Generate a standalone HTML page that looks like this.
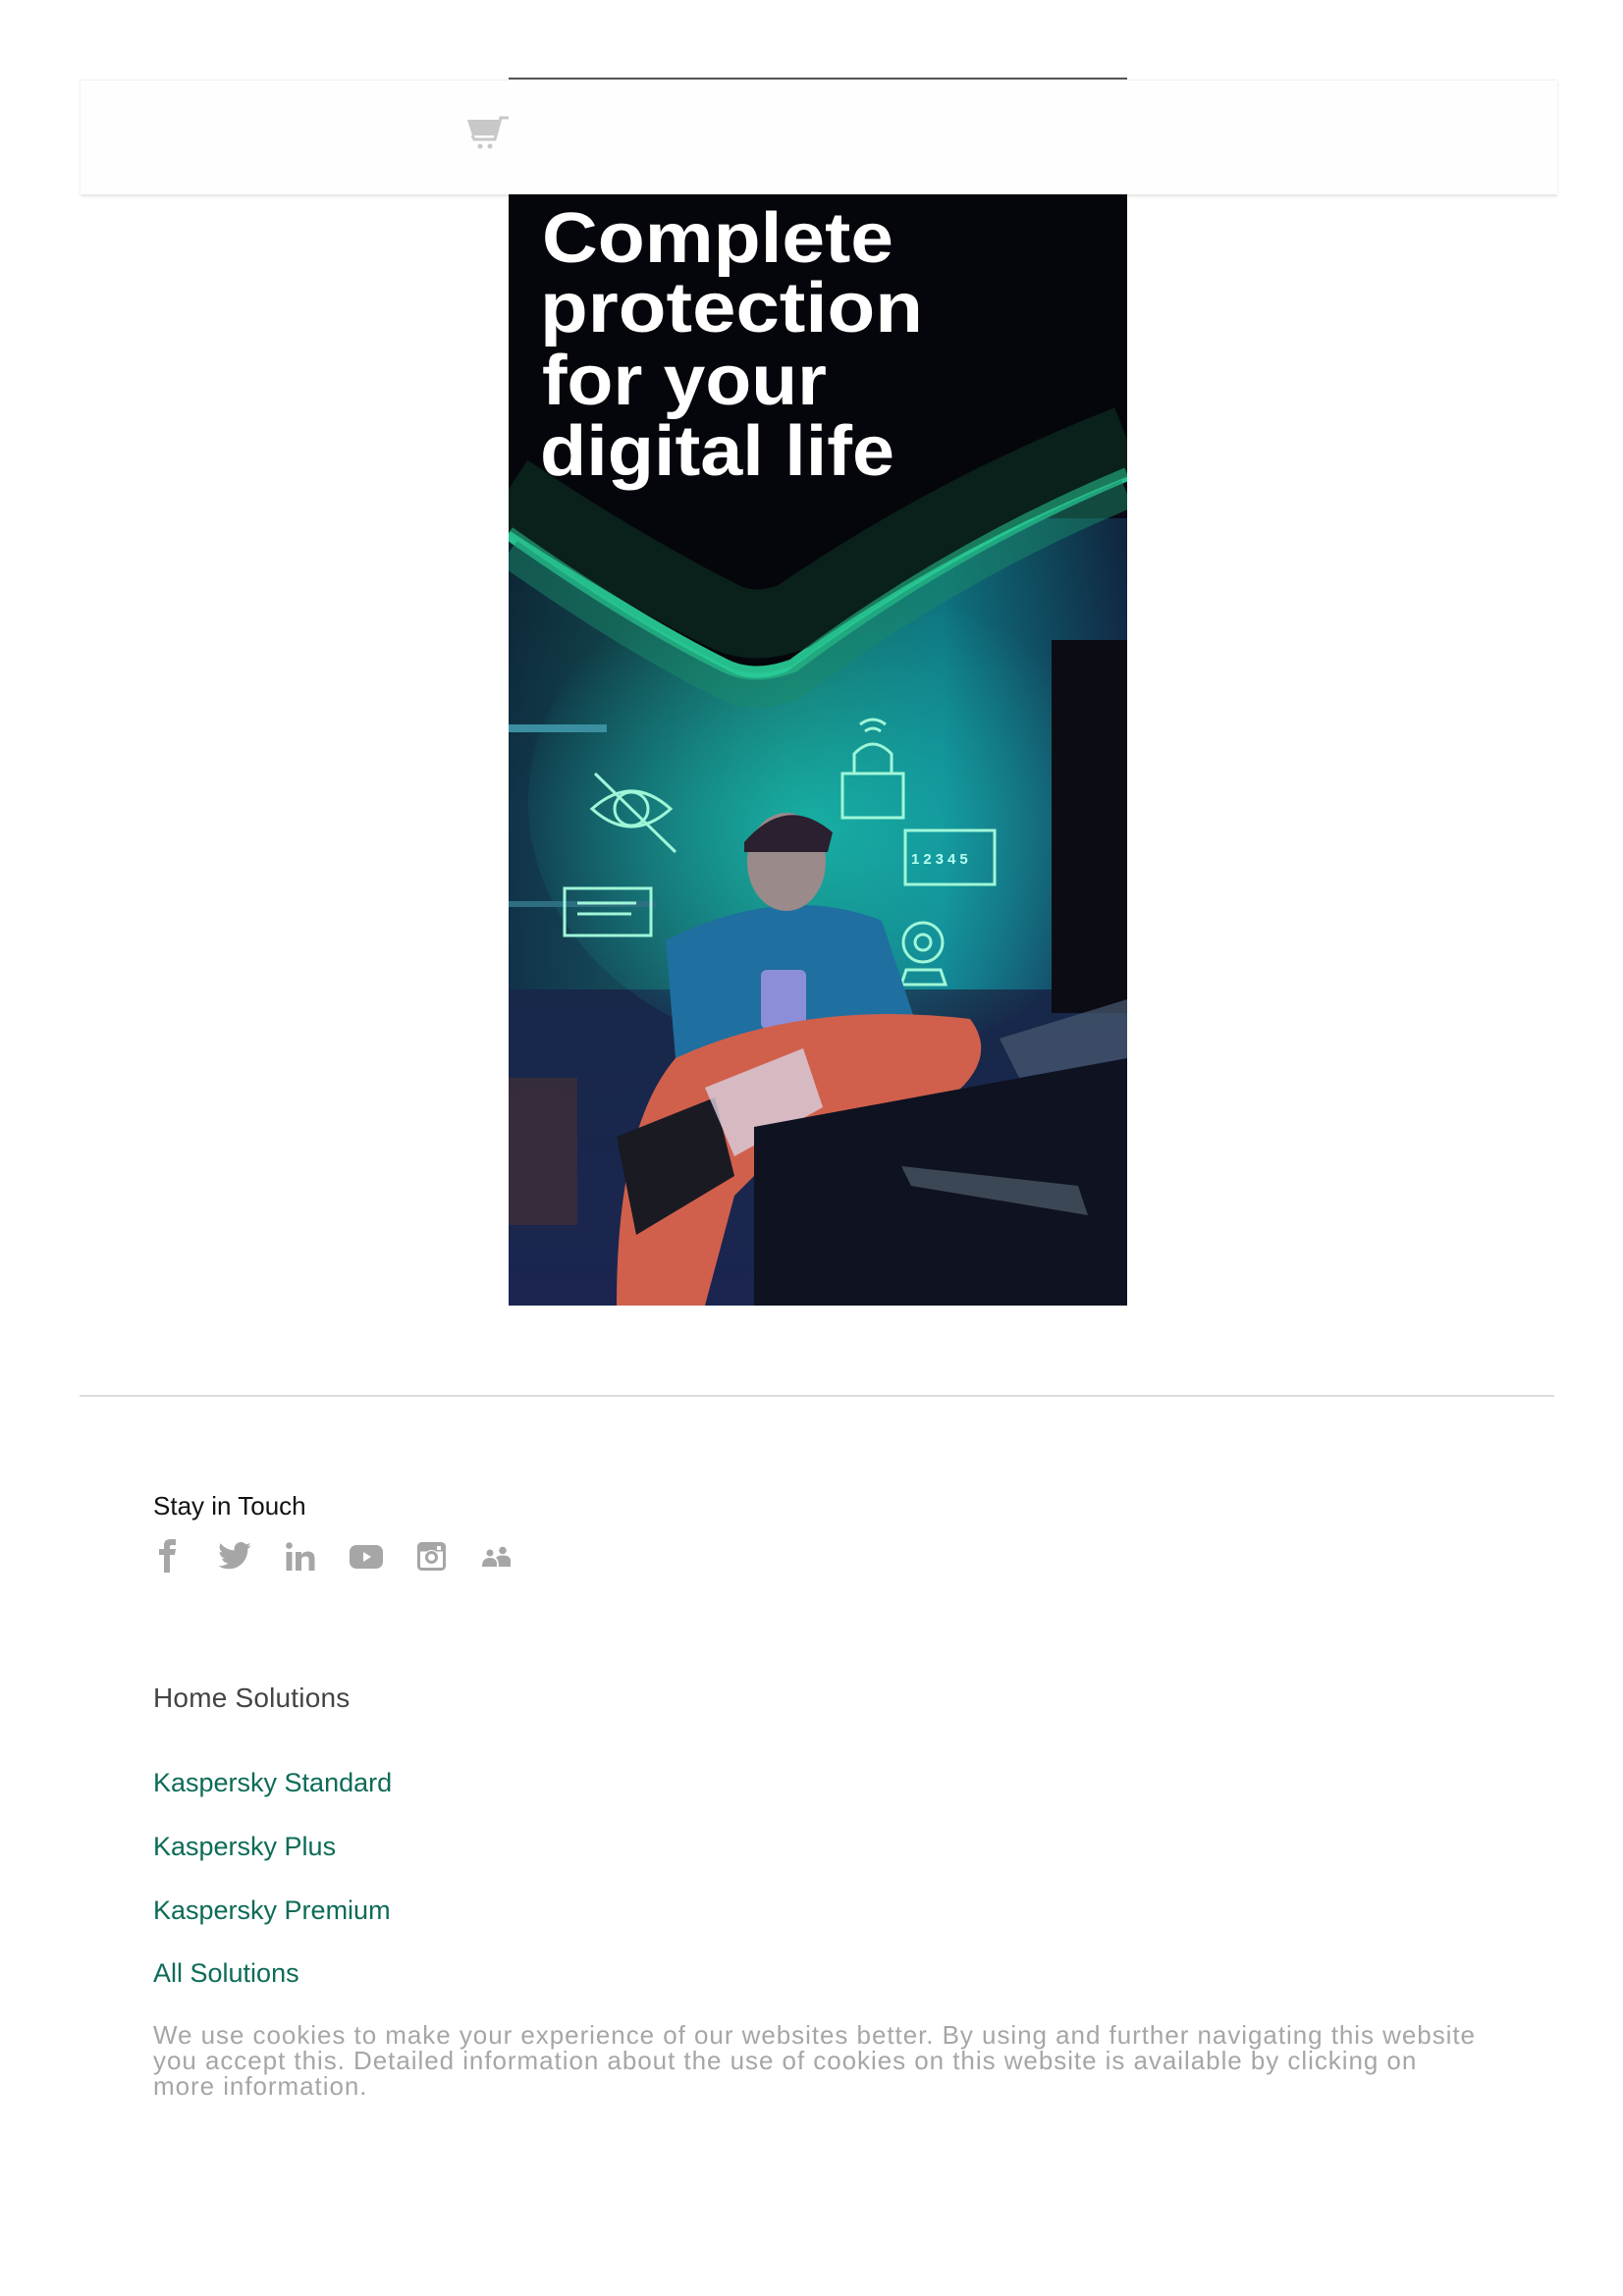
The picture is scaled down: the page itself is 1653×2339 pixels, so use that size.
<!DOCTYPE html>
<html><head><meta charset="utf-8"><style>
html,body{margin:0;padding:0;background:#fff;}
body{width:1653px;height:2339px;position:relative;overflow:hidden;font-family:"Liberation Sans",sans-serif;}
.hdr{position:absolute;left:82px;top:81px;width:1504px;height:116px;background:#fefefe;border-top:1px solid #f0f0f0;box-shadow:0 2px 3px rgba(0,0,0,0.12);}
.topline{position:absolute;left:518px;top:79px;width:630px;height:2px;background:#555;}
.img{position:absolute;left:518px;top:198px;width:630px;height:1132px;}
.hr{position:absolute;left:81px;top:1421px;width:1502px;height:2px;background:#ddd;}
.t{position:absolute;left:156px;white-space:nowrap;}
.st{top:1519px;font-size:26px;color:#111;}
.hs{top:1714px;font-size:28px;color:#444;letter-spacing:0.2px;}
.lk{font-size:27px;color:#0c6b57;}
.ck{top:2060px;font-size:26px;line-height:26px;color:#a6a6a6;letter-spacing:0.95px;}
.ic{position:absolute;top:1566px;}
</style></head><body>
<div class="hdr"></div>
<div class="topline"></div>
<svg style="position:absolute;left:474px;top:118px" width="50" height="38" viewBox="0 0 50 38">
<path d="M2 4 H34 L30 20 H7 Z" fill="#c8c8c8"/>
<path d="M7 20 L9 24 H30 L36 2 H44" stroke="#c8c8c8" stroke-width="3" fill="none"/>
<circle cx="15" cy="31" r="2.5" fill="#c8c8c8"/><circle cx="25" cy="31" r="2.5" fill="#c8c8c8"/>
</svg>
<svg class="img" viewBox="0 0 630 1132" preserveAspectRatio="none">
<defs>
<linearGradient id="bg" x1="0" y1="0" x2="0" y2="1"><stop offset="0" stop-color="#05050d"/><stop offset="0.3" stop-color="#0b0b18"/><stop offset="0.55" stop-color="#152a45"/><stop offset="1" stop-color="#1b2550"/></linearGradient>
<linearGradient id="gl" x1="0" y1="0" x2="1" y2="0"><stop offset="0" stop-color="#0d3a4a"/><stop offset="0.45" stop-color="#1aa58a"/><stop offset="0.7" stop-color="#0ec0c9"/><stop offset="1" stop-color="#14395c"/></linearGradient>
<radialGradient id="glow" cx="0.45" cy="0.55" r="0.5"><stop offset="0" stop-color="#17c3b5" stop-opacity="0.75"/><stop offset="1" stop-color="#17c3b5" stop-opacity="0"/></radialGradient>
</defs>
<rect width="630" height="1132" fill="url(#bg)"/>
<rect x="0" y="330" width="630" height="480" fill="url(#gl)" opacity="0.55"/>
<ellipse cx="340" cy="620" rx="320" ry="260" fill="url(#glow)"/>
<rect x="553" y="454" width="77" height="380" fill="#0b0c14"/>
<rect x="0" y="540" width="100" height="8" fill="#3b8fa0"/>
<rect x="0" y="720" width="150" height="6" fill="#2d6f80"/>
<path d="M0 345 Q120 430 220 480 Q250 495 290 480 Q450 360 630 285 L630 0 L0 0 Z" fill="#05060b"/>
<path d="M0 345 Q120 430 220 480 Q250 495 290 480 Q450 360 630 285" stroke="#2ad29a" stroke-width="14" fill="none" opacity="0.9"/>
<path d="M0 365 Q120 450 220 500 Q250 515 290 500 Q450 380 630 305" stroke="#1a8a6a" stroke-width="30" fill="none" opacity="0.5"/>
<path d="M0 300 Q120 380 220 430 Q250 445 290 430 Q450 320 630 250" stroke="#0d3a2b" stroke-width="70" fill="none" opacity="0.5"/>
<g fill="#fff" font-family="'Liberation Sans',sans-serif" font-weight="bold" font-size="72" lengthAdjust="spacingAndGlyphs">
<text x="34" y="69" textLength="358" lengthAdjust="spacingAndGlyphs">Complete</text><text x="32" y="140" textLength="390" lengthAdjust="spacingAndGlyphs">protection</text><text x="34" y="214" textLength="290" lengthAdjust="spacingAndGlyphs">for your</text><text x="32" y="286" textLength="361" lengthAdjust="spacingAndGlyphs">digital life</text></g>
<g stroke="#9ff7d8" stroke-width="3" fill="none">
<path d="M85 626 Q125 590 165 626 Q125 662 85 626 Z"/><circle cx="125" cy="626" r="17"/><path d="M88 590 L170 670"/>
<rect x="57" y="707" width="88" height="48"/><path d="M70 722 H130 M70 733 H125"/>
<rect x="340" y="590" width="62" height="45"/><path d="M352 590 V570 Q371 550 390 570 V590"/><path d="M358 540 Q371 530 384 540 M363 547 Q371 541 379 547"/>
<rect x="404" y="648" width="91" height="55"/>
<circle cx="422" cy="762" r="20"/><circle cx="422" cy="762" r="8"/><path d="M405 790 H440 L445 805 H400 Z"/>
</g>
<text x="410" y="682" fill="#b8fff0" font-size="15" font-family="'Liberation Sans',sans-serif" font-weight="bold" letter-spacing="4">12345</text>
<path d="M160 760 Q280 700 380 740 L420 860 L170 880 Z" fill="#1f6fa0"/>
<ellipse cx="283" cy="680" rx="40" ry="50" fill="#9a8a8a"/>
<path d="M240 660 Q283 610 330 650 L325 670 L240 670 Z" fill="#2a2030"/>
<rect x="257" y="790" width="46" height="60" rx="6" fill="#8c8ed8"/>
<path d="M170 880 Q300 820 470 840 Q500 880 450 920 L300 950 L230 1020 L200 1132 L110 1132 Q110 950 170 880 Z" fill="#d0604c"/>
<path d="M110 960 L210 920 L230 1000 L130 1060 Z" fill="#1a1a22"/>
<path d="M200 910 L300 870 L320 930 L230 980 Z" fill="#d8d0e0" opacity="0.8"/>
<path d="M250 950 L630 880 L630 1132 L250 1132 Z" fill="#0f1220"/>
<path d="M400 990 L580 1010 L590 1040 L410 1010 Z" fill="#5a6a7a" opacity="0.6"/>
<path d="M500 860 L630 820 L630 880 L520 900 Z" fill="#4a5a70" opacity="0.7"/>
<rect x="0" y="900" width="70" height="150" fill="#4a3030" opacity="0.6"/>
</svg>
<div class="hr"></div>
<div class="t st">Stay in Touch</div>
<svg class="ic" style="left:160px" width="22" height="36" viewBox="0 0 22 36"><path d="M7 36 V18 H2 V12 H7 V8 Q7 2 14 2 H19 V8 H15 Q13 8 13 10 V12 H19 L18 18 H13 V36 Z" fill="#a6a6a6"/></svg>
<svg class="ic" style="left:222px;top:1571px" width="34" height="28" viewBox="0 0 24 20"><path d="M24 2.4c-.9.4-1.8.6-2.8.8 1-.6 1.800-1.6 2.1-2.7-1 .6-2 1-3.1 1.2C19.3.6 18 0 16.6 0c-2.7 0-4.9 2.2-4.9 4.9 0 .4 0 .8.1 1.1C7.7 5.800 4.1 3.9 1.7.9c-.4.7-.7 1.6-.7 2.5 0 1.7.9 3.2 2.2 4.1-.8 0-1.6-.2-2.2-.6v.1c0 2.4 1.7 4.4 3.9 4.8-.4.1-.8.2-1.3.2-.3 0-.6 0-.9-.1.6 2 2.4 3.4 4.6 3.4-1.7 1.3-3.8 2.1-6.1 2.1-.4 0-.8 0-1.2-.1 2.2 1.4 4.8 2.2 7.5 2.2 9.1 0 14-7.5 14-14v-.6c1-.7 1.8-1.6 2.5-2.5z" fill="#a6a6a6"/></svg>
<svg class="ic" style="left:291px;top:1571px" width="30" height="30" viewBox="0 0 30 30"><circle cx="3.5" cy="3.5" r="3.3" fill="#a6a6a6"/><rect x="0.5" y="10" width="6" height="19" fill="#a6a6a6"/><path d="M10 29 V10 H16 V13 Q18 9.5 22.5 9.5 Q29.5 9.5 29.5 17 V29 H23.5 V18 Q23.5 14.5 20.5 14.5 Q16 14.5 16 18.5 V29 Z" fill="#a6a6a6"/></svg>
<svg class="ic" style="left:356px;top:1574px" width="34" height="24" viewBox="0 0 34 24"><rect width="34" height="24" rx="7" fill="#a6a6a6"/><path d="M14 7 L22 12 L14 17 Z" fill="#fff"/></svg>
<svg class="ic" style="left:425px;top:1571px" width="29" height="29" viewBox="0 0 29 29"><rect x="1.5" y="1.5" width="26" height="26" rx="3" fill="none" stroke="#a6a6a6" stroke-width="3"/><rect x="1.5" y="1.5" width="26" height="8" fill="#a6a6a6"/><circle cx="14.5" cy="15.5" r="7.5" fill="#fff"/><circle cx="14.5" cy="15.5" r="5" fill="none" stroke="#a6a6a6" stroke-width="3"/><rect x="20" y="4" width="4" height="4" fill="#fff"/></svg>
<svg class="ic" style="left:491px;top:1575px" width="30" height="22" viewBox="0 0 30 22"><circle cx="8" cy="7" r="3.5" fill="#a6a6a6"/><circle cx="21" cy="4.5" r="3.8" fill="#a6a6a6"/><path d="M0 21 Q0 12 8 12 Q14 12 15 17 V21 Z" fill="#a6a6a6"/><path d="M14 12 Q16 9.5 21 9.5 Q28 9.5 29 14 V21 H17 Q17 14 14 12 Z" fill="#a6a6a6"/></svg>
<div class="t hs">Home Solutions</div>
<div class="t lk" style="top:1801px">Kaspersky Standard</div>
<div class="t lk" style="top:1866px">Kaspersky Plus</div>
<div class="t lk" style="top:1931px">Kaspersky Premium</div>
<div class="t lk" style="top:1995px">All Solutions</div>
<div class="t ck">We use cookies to make your experience of our websites better. By using and further navigating this website<br>you accept this. Detailed information about the use of cookies on this website is available by clicking on<br>more information.</div>
</body></html>
